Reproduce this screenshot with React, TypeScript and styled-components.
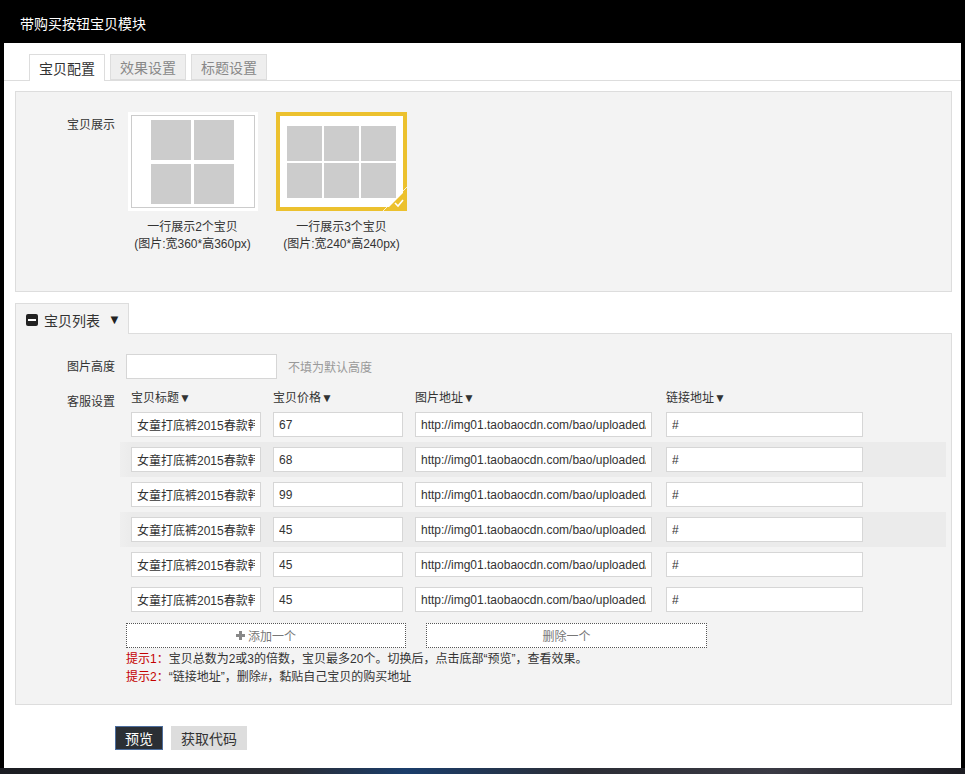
import React from "react";
import styled, { createGlobalStyle } from "styled-components";

const GlobalStyle = createGlobalStyle`
  html, body {
    margin: 0;
    padding: 0;
    background: linear-gradient(90deg, #1b1d22 0%, #2a2c33 30%, #1a3d6b 42%, #2b2d35 60%, #3a3a44 80%, #1c1c22 100%);
  }
  body {
    font-family: "Liberation Sans", "Noto Sans CJK SC", sans-serif;
    font-size: 12px;
    color: #333;
  }
  * { box-sizing: border-box; }
`;

// window frame
const Window = styled.div`
  width: 965px;
  height: 768px;
  background: #fff;
  border-left: 4px solid #000;
  border-right: 4px solid #000;
  display: flex;
  flex-direction: column;
`;

const TitleBar = styled.div`
  height: 43px;
  background: #000;
  color: #fff;
  font-size: 14px;
  padding: 3px 0 0 16px;
  display: flex;
  align-items: center;
`;

const TabBar = styled.div`
  display: flex;
  align-items: flex-end;
  gap: 5px;
  margin-top: 11px;
  padding-left: 25px;
  border-bottom: 1px solid #ddd;
  height: 27px;
`;

const Tab = styled.div<{ $active?: boolean }>`
  height: ${(p) => (p.$active ? "27px" : "26px")};
  margin-bottom: ${(p) => (p.$active ? "-1px" : "0")};
  padding: 0 9px;
  display: flex;
  align-items: center;
  font-size: 14px;
  border: 1px solid #ddd;
  border-bottom: ${(p) => (p.$active ? "none" : "1px solid #ddd")};
  background: ${(p) => (p.$active ? "#fff" : "#eee")};
  color: ${(p) => (p.$active ? "#333" : "#888")};
`;

const Body = styled.div`
  padding: 0 9px 0 11px;
`;

const Panel = styled.div`
  background: #f3f3f3;
  border: 1px solid #ddd;
`;

const ShowPanel = styled(Panel)`
  margin-top: 10px;
  height: 201px;
  padding-top: 20px;
  display: flex;
`;

const Label = styled.div`
  width: 99px;
  flex: none;
  text-align: right;
  line-height: 18px;
  color: #333;
`;

const ShowLabel = styled(Label)`
  padding-top: 4px;
`;

const Options = styled.div`
  display: flex;
  gap: 18px;
  margin-left: 12px;
`;

const Option = styled.div`
  width: 131px;
  display: flex;
  flex-direction: column;
  align-items: center;
`;

const Caption = styled.div`
  margin-top: 8px;
  line-height: 17px;
  text-align: center;
  white-space: nowrap;
  color: #333;
`;

const ThumbTwo = styled.div`
  width: 130px;
  height: 99px;
  background: #fff;
  padding: 3px;
`;

const ThumbInner = styled.div`
  height: 100%;
  border: 1px solid #ccc;
  display: flex;
  align-items: center;
  justify-content: center;
`;

const TileGrid = styled.div<{ $cols: number; $size: number; $gap: string }>`
  display: grid;
  grid-template-columns: repeat(${(p) => p.$cols}, ${(p) => p.$size}px);
  grid-auto-rows: ${(p) => p.$size}px;
  gap: ${(p) => p.$gap};
`;

const Tile = styled.div`
  background: #ccc;
`;

const ThumbThree = styled.div`
  position: relative;
  width: 131px;
  height: 99px;
  background: #fff;
  border: 4px solid #ecc12e;
  display: flex;
  align-items: center;
  justify-content: center;
  padding-top: 1px;
`;

const CheckCorner = styled.svg`
  position: absolute;
  right: -4px;
  bottom: -4px;
`;

// list section
const ListSection = styled.div`
  margin-top: 11px;
`;

const CollapseTab = styled.div`
  position: relative;
  z-index: 1;
  width: 114px;
  height: 31px;
  margin-bottom: -1px;
  border: 1px solid #ddd;
  border-bottom: none;
  background: #f3f3f3;
  display: flex;
  align-items: center;
  gap: 6px;
  padding: 1px 0 0 10px;
  font-size: 14px;
  color: #333;
`;

const Caret = styled.span`
  margin-left: 2px;
  font-size: 13px;
  color: #222;
`;

const MinusBox = styled.span`
  width: 12px;
  height: 12px;
  border-radius: 2px;
  background: #222;
  display: inline-flex;
  align-items: center;
  justify-content: center;
  &::after {
    content: "";
    width: 8px;
    height: 2px;
    background: #fff;
  }
`;

const ListPanel = styled(Panel)`
  padding: 20px 0 18px 0;
`;

const FieldRow = styled.div`
  display: flex;
  align-items: center;
  height: 25px;
`;

const Input = styled.input<{ $w: number }>`
  width: ${(p) => p.$w}px;
  height: 25px;
  border: 1px solid #d6d6d6;
  background: #fff;
  padding: 0 5px;
  font-family: inherit;
  font-size: 12px;
  color: #333;
  outline: none;
  margin: 0;
`;

const HeightInput = styled(Input)`
  margin-left: 11px;
`;

const Hint = styled.span`
  margin-left: 11px;
  color: #999;
`;

const ServiceRow = styled.div`
  display: flex;
  margin-top: 11px;
`;

const ServiceLabel = styled(Label)`
  padding-top: 3px;
`;

const Table = styled.div`
  margin-left: 5px;
  width: 826px;
`;

const Cols = styled.div`
  display: grid;
  grid-template-columns: 142px 142px 251px 197px;
  padding-left: 11px;
  align-items: center;
`;

const HeadRow = styled(Cols)`
  height: 17px;
  line-height: 17px;
  color: #333;
`;

const ItemRow = styled(Cols)<{ $striped?: boolean }>`
  height: 35px;
  background: ${(p) =>
    p.$striped ? "linear-gradient(90deg, #efefef 0px, #ebebeb 12px, #ebebeb 100%)" : "transparent"};
`;

const Actions = styled.div`
  display: flex;
  gap: 20px;
  margin: 6px 0 0 110px;
`;

const DashButton = styled.button<{ $w: number }>`
  width: ${(p) => p.$w}px;
  height: 25px;
  border: 1px dotted #555;
  background: #fff;
  color: #777;
  font-family: inherit;
  font-size: 12px;
  display: flex;
  align-items: center;
  justify-content: center;
  gap: 3px;
  padding: 0;
`;

const Tips = styled.div`
  margin: 2px 0 0 110px;
  line-height: 18px;
  color: #333;
`;

const TipKey = styled.span`
  color: #c40000;
`;

const Footer = styled.div`
  display: flex;
  gap: 8px;
  margin: 21px 0 0 100px;
`;

const FootButton = styled.button<{ $dark?: boolean }>`
  height: 24px;
  padding: 0 9px;
  border: 1px solid ${(p) => (p.$dark ? "#4d6e9e" : "#ddd")};
  background: ${(p) => (p.$dark ? "#2b2f35" : "#ddd")};
  color: ${(p) => (p.$dark ? "#fff" : "#333")};
  font-family: inherit;
  font-size: 14px;
`;

const items = [
  { price: "67", striped: false },
  { price: "68", striped: true },
  { price: "99", striped: false },
  { price: "45", striped: true },
  { price: "45", striped: false },
  { price: "45", striped: false },
];

const App = () => {
  return (
    <>
      <GlobalStyle />
      <Window>
        <TitleBar>带购买按钮宝贝模块</TitleBar>
        <TabBar>
          <Tab $active>宝贝配置</Tab>
          <Tab>效果设置</Tab>
          <Tab>标题设置</Tab>
        </TabBar>
        <Body>
          <ShowPanel>
            <ShowLabel>宝贝展示</ShowLabel>
            <Options>
              <Option>
                <ThumbTwo>
                  <ThumbInner>
                    <TileGrid $cols={2} $size={40} $gap="4px 3px">
                      {Array.from({ length: 4 }).map((_, i) => (
                        <Tile key={i} />
                      ))}
                    </TileGrid>
                  </ThumbInner>
                </ThumbTwo>
                <Caption>
                  一行展示2个宝贝
                  <br />
                  (图片:宽360*高360px)
                </Caption>
              </Option>
              <Option>
                <ThumbThree>
                  <TileGrid $cols={3} $size={35} $gap="2px 2px">
                    {Array.from({ length: 6 }).map((_, i) => (
                      <Tile key={i} />
                    ))}
                  </TileGrid>
                  <CheckCorner width="24" height="24" viewBox="0 0 24 24">
                    <polygon points="24,2 24,24 2,24" fill="#ecc12e" />
                    <line x1="24" y1="0" x2="0" y2="24" stroke="#fff" strokeWidth="1" opacity="0.8" />
                    <polyline points="12,16 15,19 20,13" fill="none" stroke="#fff" strokeWidth="1.6" />
                  </CheckCorner>
                </ThumbThree>
                <Caption>
                  一行展示3个宝贝
                  <br />
                  (图片:宽240*高240px)
                </Caption>
              </Option>
            </Options>
          </ShowPanel>

          <ListSection>
            <CollapseTab>
              <MinusBox />
              宝贝列表<Caret>▼</Caret>
            </CollapseTab>
            <ListPanel>
              <FieldRow>
                <Label>图片高度</Label>
                <HeightInput $w={151} defaultValue="" />
                <Hint>不填为默认高度</Hint>
              </FieldRow>
              <ServiceRow>
                <ServiceLabel>客服设置</ServiceLabel>
                <Table>
                  <HeadRow>
                    <span>宝贝标题▼</span>
                    <span>宝贝价格▼</span>
                    <span>图片地址▼</span>
                    <span>链接地址▼</span>
                  </HeadRow>
                  {items.map((it, i) => (
                    <ItemRow key={i} $striped={it.striped}>
                      <Input $w={130} defaultValue="女童打底裤2015春款韩版" />
                      <Input $w={130} defaultValue={it.price} />
                      <Input $w={237} defaultValue="http://img01.taobaocdn.com/bao/uploaded/i1/T1.jpg" />
                      <Input $w={197} defaultValue="#" />
                    </ItemRow>
                  ))}
                </Table>
              </ServiceRow>
              <Actions>
                <DashButton $w={280}>
                  <svg width="9" height="9" viewBox="0 0 9 9">
                    <path d="M3 0h3v3h3v3H6v3H3V6H0V3h3z" fill="#888" />
                  </svg>
                  添加一个
                </DashButton>
                <DashButton $w={281}>删除一个</DashButton>
              </Actions>
              <Tips>
                <div>
                  <TipKey>提示1：</TipKey>宝贝总数为2或3的倍数，宝贝最多20个。切换后，点击底部“预览”，查看效果。
                </div>
                <div>
                  <TipKey>提示2：</TipKey>“链接地址”，删除#，黏贴自己宝贝的购买地址
                </div>
              </Tips>
            </ListPanel>
          </ListSection>

          <Footer>
            <FootButton $dark>预览</FootButton>
            <FootButton>获取代码</FootButton>
          </Footer>
        </Body>
      </Window>
    </>
  );
};

export default App;
